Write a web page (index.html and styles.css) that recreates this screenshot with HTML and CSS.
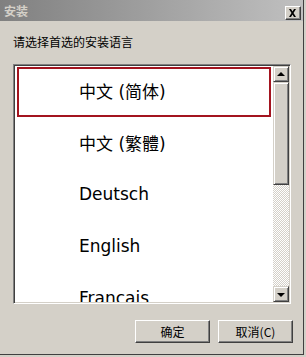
FILE: index.html
```html
<!DOCTYPE html>
<html lang="zh-CN">
<head>
    <meta charset="UTF-8">
    <title>安装</title>
    <link rel="stylesheet" href="styles.css">
</head>
<body>
    <div class="window">
        <div class="titlebar">
            <span class="title">安装</span>
            <div class="close-btn">
                <svg width="9" height="8" viewBox="0 0 9 8">
                    <path d="M1 0h2l1.5 2.5L6 0h2L5.5 4 8 8H6L4.5 5.5 3 8H1l2.5-4z" fill="#000"/>
                </svg>
            </div>
        </div>

        <div class="content">
            <div class="prompt">请选择首选的安装语言</div>

            <div class="listbox">
                <div class="list">
                    <div class="item selected">中文 (简体)</div>
                    <div class="item">中文 (繁體)</div>
                    <div class="item">Deutsch</div>
                    <div class="item">English</div>
                    <div class="item">Francais</div>
                </div>
                <div class="scrollbar">
                    <div class="sb-btn"><span class="arrow-up"></span></div>
                    <div class="sb-thumb"></div>
                    <div class="sb-track"></div>
                    <div class="sb-btn"><span class="arrow-down"></span></div>
                </div>
            </div>

            <div class="buttons">
                <div class="btn">确定</div>
                <div class="btn">取消(C)</div>
            </div>
        </div>
    </div>
</body>
</html>
```

FILE: styles.css
```css
body {
    margin: 0;
    background: #d4d0c8;
    font-family: "Noto Sans CJK SC", "DejaVu Sans", sans-serif;
}

.window {
    width: 304px;
    height: 355px;
    box-sizing: border-box;
    border-right: 1px solid #404040;
    border-bottom: 1px solid #404040;
    display: flex;
    flex-direction: column;
}

.titlebar {
    height: 20px;
    background: linear-gradient(90deg, #808080 0%, #c0c0c0 100%);
    display: flex;
    justify-content: space-between;
    align-items: flex-end;
    padding: 0 2px 1px 4px;
}

.title {
    color: #d4d0c8;
    font-size: 12px;
    font-weight: bold;
    line-height: 19px;
    align-self: center;
}

.close-btn {
    width: 16px;
    height: 14px;
    box-sizing: border-box;
    background: #d4d0c8;
    border-top: 1px solid #fff;
    border-left: 1px solid #fff;
    border-right: 1px solid #404040;
    border-bottom: 1px solid #404040;
    box-shadow: inset -1px -1px 0 #808080;
    display: flex;
    align-items: center;
    justify-content: center;
    padding: 0 1px 1px 0;
}

.close-btn svg {
    display: block;
}

.content {
    flex: 1;
    display: flex;
    flex-direction: column;
    padding: 13px 10px 0 13px;
}

.prompt {
    font-size: 12px;
    line-height: 15px;
    color: #000;
}

.listbox {
    margin-top: 15px;
    margin-right: 2px;
    height: 240px;
    box-sizing: border-box;
    display: flex;
    border-top: 1px solid #808080;
    border-left: 1px solid #808080;
    border-right: 1px solid #fff;
    border-bottom: 1px solid #fff;
    box-shadow: inset 1px 1px 0 #404040, inset -1px -1px 0 #d4d0c8;
    padding: 1px;
}

.list {
    flex: 1;
    background: #fff;
    overflow: hidden;
    padding: 1px 2px 0 2px;
}

.item {
    height: 50px;
    margin-bottom: 2px;
    box-sizing: border-box;
    border: 2px solid transparent;
    padding: 0 0 4px 60px;
    display: flex;
    align-items: center;
    font-family: "DejaVu Sans", "Noto Sans CJK SC", sans-serif;
    font-size: 17px;
    color: #000;
}

.item.selected {
    border-color: #a3141f;
}

.scrollbar {
    width: 16px;
    display: flex;
    flex-direction: column;
}

.sb-btn,
.sb-thumb {
    box-sizing: border-box;
    background: #d4d0c8;
    border-top: 1px solid #d4d0c8;
    border-left: 1px solid #d4d0c8;
    border-right: 1px solid #404040;
    border-bottom: 1px solid #404040;
    box-shadow: inset 1px 1px 0 #fff, inset -1px -1px 0 #808080;
}

.sb-btn {
    height: 16px;
    display: flex;
    align-items: center;
    justify-content: center;
}

.sb-thumb {
    height: 103px;
}

.sb-track {
    flex: 1;
    background: repeating-conic-gradient(#d4d0c8 0 25%, #fff 0 50%) 0 0 / 2px 2px;
}

.arrow-up {
    width: 0;
    height: 0;
    border-left: 4px solid transparent;
    border-right: 4px solid transparent;
    border-bottom: 4px solid #000;
    margin-bottom: 1px;
}

.arrow-down {
    width: 0;
    height: 0;
    border-left: 4px solid transparent;
    border-right: 4px solid transparent;
    border-top: 4px solid #000;
    margin-top: 1px;
}

.buttons {
    display: flex;
    justify-content: flex-end;
    gap: 8px;
    margin-top: 16px;
}

.btn {
    width: 75px;
    height: 23px;
    box-sizing: border-box;
    background: #d4d0c8;
    border-top: 1px solid #fff;
    border-left: 1px solid #fff;
    border-right: 1px solid #404040;
    border-bottom: 1px solid #404040;
    box-shadow: inset -1px -1px 0 #808080;
    display: flex;
    align-items: center;
    justify-content: center;
    font-size: 12px;
    color: #000;
}
```
